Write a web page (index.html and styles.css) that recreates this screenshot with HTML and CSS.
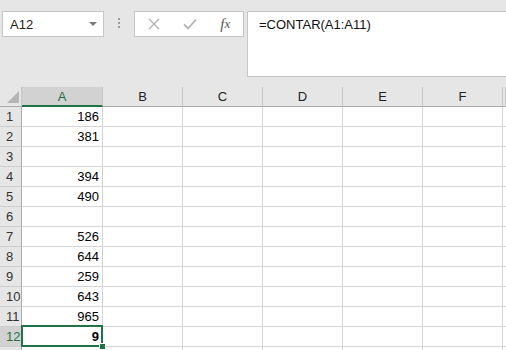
FILE: index.html
```html
<!DOCTYPE html>
<html lang="pt">
<head>
    <meta charset="UTF-8">
    <title>CONTAR</title>

    <link rel="stylesheet" href="styles.css">
</head>
<body>
<div class="toolbar">
    <div class="nameBox">
        <span>A12</span>
        <svg class="drop" width="8" height="4" viewBox="0 0 8 4"><path d="M0 0 H8 L4 4 Z" fill="#7a7a7a"/></svg>
    </div>
    <div class="grip"><i></i><i></i><i></i></div>
    <div class="fButtons">
        <span class="slot">
            <svg width="12" height="12" viewBox="0 0 12 12"><path d="M1 1 L11 11 M11 1 L1 11" stroke="#b3b3b3" stroke-width="1.4" fill="none"/></svg>
        </span>
        <span class="slot">
            <svg width="14" height="12" viewBox="0 0 14 12"><path d="M1 6.5 L5 10.5 L13 1.5" stroke="#b3b3b3" stroke-width="1.8" fill="none"/></svg>
        </span>
        <span class="slot fx"><b>f</b>x</span>
    </div>
    <div class="formula">=CONTAR(A1:A11)</div>
</div>

<div class="sheet">
    <div class="row head">
        <div class="corner"><svg width="12" height="12" viewBox="0 0 12 12"><path d="M12 0 V12 H0 Z" fill="#b5b5b5"/></svg></div>
        <div class="ch sel">A</div><div class="ch">B</div><div class="ch">C</div><div class="ch">D</div><div class="ch">E</div><div class="ch">F</div><div class="ch"></div>
    </div>
    <div class="row"><div class="rh">1</div><div class="c">186</div><div class="c"></div><div class="c"></div><div class="c"></div><div class="c"></div><div class="c"></div><div class="c"></div></div>
    <div class="row"><div class="rh">2</div><div class="c">381</div><div class="c"></div><div class="c"></div><div class="c"></div><div class="c"></div><div class="c"></div><div class="c"></div></div>
    <div class="row"><div class="rh">3</div><div class="c"></div><div class="c"></div><div class="c"></div><div class="c"></div><div class="c"></div><div class="c"></div><div class="c"></div></div>
    <div class="row"><div class="rh">4</div><div class="c">394</div><div class="c"></div><div class="c"></div><div class="c"></div><div class="c"></div><div class="c"></div><div class="c"></div></div>
    <div class="row"><div class="rh">5</div><div class="c">490</div><div class="c"></div><div class="c"></div><div class="c"></div><div class="c"></div><div class="c"></div><div class="c"></div></div>
    <div class="row"><div class="rh">6</div><div class="c"></div><div class="c"></div><div class="c"></div><div class="c"></div><div class="c"></div><div class="c"></div><div class="c"></div></div>
    <div class="row"><div class="rh">7</div><div class="c">526</div><div class="c"></div><div class="c"></div><div class="c"></div><div class="c"></div><div class="c"></div><div class="c"></div></div>
    <div class="row"><div class="rh">8</div><div class="c">644</div><div class="c"></div><div class="c"></div><div class="c"></div><div class="c"></div><div class="c"></div><div class="c"></div></div>
    <div class="row"><div class="rh">9</div><div class="c">259</div><div class="c"></div><div class="c"></div><div class="c"></div><div class="c"></div><div class="c"></div><div class="c"></div></div>
    <div class="row"><div class="rh">10</div><div class="c">643</div><div class="c"></div><div class="c"></div><div class="c"></div><div class="c"></div><div class="c"></div><div class="c"></div></div>
    <div class="row"><div class="rh">11</div><div class="c">965</div><div class="c"></div><div class="c"></div><div class="c"></div><div class="c"></div><div class="c"></div><div class="c"></div></div>
    <div class="row"><div class="rh selRow">12</div><div class="c active">9</div><div class="c"></div><div class="c"></div><div class="c"></div><div class="c"></div><div class="c"></div><div class="c"></div></div>
    <div class="row"><div class="rh"></div><div class="c"></div><div class="c"></div><div class="c"></div><div class="c"></div><div class="c"></div><div class="c"></div><div class="c"></div></div>
</div>
</body>
</html>
```

FILE: styles.css
```css
body {
    margin: 0;
    background-color: #e6e6e6;
    font-family: "Liberation Sans", Arial, sans-serif;
    font-size: 13px;
    color: #000;
    overflow: hidden;
}

.toolbar {
    display: flex;
    align-items: flex-start;
    height: 77px;
    padding: 11px 0 0 2px;
    box-sizing: border-box;
}

.nameBox {
    display: flex;
    align-items: center;
    justify-content: space-between;
    width: 102px;
    height: 26px;
    box-sizing: border-box;
    padding: 0 6px 0 7px;
    background: #fff;
    border: 1px solid #c6c6c6;
    color: #222;
}

.grip {
    display: flex;
    flex-direction: column;
    align-items: center;
    gap: 2px;
    width: 30px;
    padding-top: 7px;
}

.grip i {
    width: 2px;
    height: 2px;
    background: #9c9c9c;
}

.fButtons {
    display: flex;
    align-items: center;
    width: 110px;
    height: 26px;
    box-sizing: border-box;
    padding-left: 1px;
    background: #fff;
    border: 1px solid #c6c6c6;
}

.slot {
    display: flex;
    align-items: center;
    justify-content: center;
    width: 36px;
}

.fx {
    font-family: "Liberation Serif", serif;
    font-style: italic;
    font-size: 13px;
    color: #555;
}

.fx b {
    font-weight: normal;
    font-size: 15px;
}

.formula {
    flex: 1;
    height: 66px;
    box-sizing: border-box;
    margin: 0 -2px 0 3px;
    padding: 5px 11px;
    line-height: 16px;
    background: #fff;
    border: 1px solid #c6c6c6;
    color: #111;
}

.sheet {
    margin-top: 10px;
    background: #fff;
}

.row {
    display: grid;
    grid-template-columns: 22px 81px repeat(5, 80px) 1fr;
    height: 20px;
}

.row > div {
    box-sizing: border-box;
    height: 20px;
}

.head {
    background: #e6e6e6;
}

.corner {
    display: flex;
    align-items: flex-end;
    justify-content: flex-end;
    padding: 0 2px 3px 0;
    border-right: 1px solid #c6c6c6;
    border-bottom: 1px solid #ababab;
}

.ch {
    text-align: center;
    line-height: 19px;
    color: #222;
    border-right: 1px solid #c6c6c6;
    border-bottom: 1px solid #ababab;
}

.ch.sel {
    background: #d2d2d2;
    color: #217346;
    border-bottom: 2px solid #217346;
}

.rh {
    padding-left: 6px;
    line-height: 19px;
    color: #333;
    background: #e6e6e6;
    border-right: 1px solid #ababab;
    border-bottom: 1px solid #cdcdcd;
}

.rh.selRow {
    background: #d2d2d2;
    color: #217346;
}

.c {
    padding-right: 3px;
    text-align: right;
    line-height: 19px;
    border-right: 1px solid #d4d4d4;
    border-bottom: 1px solid #d4d4d4;
}

.c.active {
    position: relative;
    font-weight: bold;
}

.c.active::after {
    content: "";
    position: absolute;
    top: -2px;
    left: -1px;
    right: -1px;
    bottom: -1px;
    border: 2px solid #217346;
}

.c.active::before {
    content: "";
    position: absolute;
    right: -4px;
    bottom: -4px;
    width: 5px;
    height: 5px;
    background: #217346;
    border: 1px solid #fff;
    z-index: 1;
}
```
